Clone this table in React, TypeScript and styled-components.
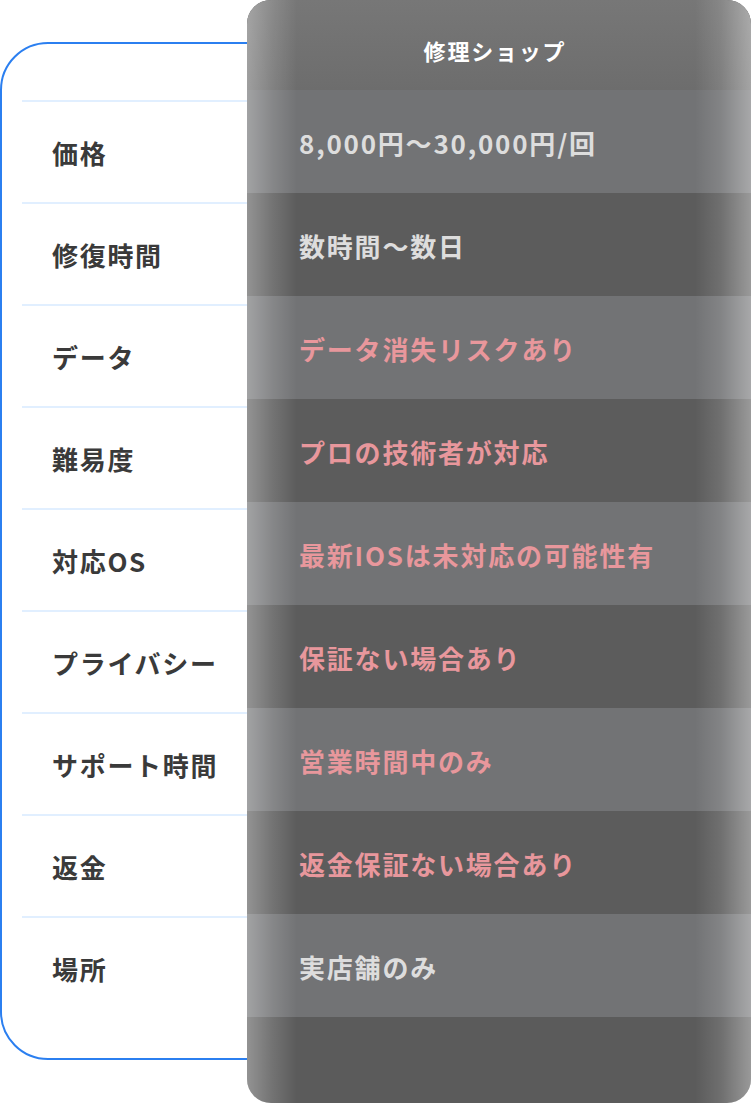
import React from 'react';
import styled, { createGlobalStyle } from 'styled-components';

const GlobalStyle = createGlobalStyle`
  html, body {
    margin: 0;
    padding: 0;
    background: #ffffff;
  }
  body {
    font-family: "Noto Sans CJK JP", "Noto Sans", sans-serif;
  }
`;

type Row = { label: string; value: string; warn?: boolean };

const rows: Row[] = [
  { label: '価格', value: '8,000円～30,000円/回' },
  { label: '修復時間', value: '数時間～数日' },
  { label: 'データ', value: 'データ消失リスクあり', warn: true },
  { label: '難易度', value: 'プロの技術者が対応', warn: true },
  { label: '対応OS', value: '最新IOSは未対応の可能性有', warn: true },
  { label: 'プライバシー', value: '保証ない場合あり', warn: true },
  { label: 'サポート時間', value: '営業時間中のみ', warn: true },
  { label: '返金', value: '返金保証ない場合あり', warn: true },
  { label: '場所', value: '実店舗のみ' },
];

const Stage = styled.div`
  display: grid;
  grid-template-columns: 247px 504px;
  width: 752px;
  height: 1104px;
`;

/**
 * Left label card (sits under the shop panel)
 *
 */
const LabelCard = styled.div`
  grid-row: 1;
  grid-column: 1 / 3;
  align-self: start;
  margin-top: 42px;
  padding: 56px 0 40px 20px;
  border: 2px solid #2b7ff0;
  border-radius: 48px;
  background: #ffffff;
`;

const LabelRow = styled.div`
  display: flex;
  align-items: center;
  height: 102px;
  box-sizing: border-box;
  padding: 1px 0 0 30px;
  border-top: 2px solid #e1efff;
  font-size: 26px;
  font-weight: 700;
  color: #3a3a3a;
  letter-spacing: 1.7px;
`;

/**
 * Shop column
 *
 */
const ShopPanel = styled.div`
  grid-row: 1;
  grid-column: 2;
  position: relative;
  z-index: 1;
  display: flex;
  flex-direction: column;
  height: 1103px;
  border-radius: 24px;
  overflow: hidden;
  background: #5b5b5b;

  &::after {
    content: '';
    position: absolute;
    inset: 0;
    pointer-events: none;
    background: linear-gradient(
      to right,
      rgba(255, 255, 255, 0.34) 0,
      rgba(255, 255, 255, 0.14) 26px,
      rgba(255, 255, 255, 0) 50px,
      rgba(255, 255, 255, 0) calc(100% - 56px),
      rgba(255, 255, 255, 0.12) calc(100% - 30px),
      rgba(255, 255, 255, 0.38) 100%
    );
  }
`;

const ShopHeader = styled.div`
  display: flex;
  align-items: center;
  justify-content: center;
  height: 90px;
  box-sizing: border-box;
  padding: 10px 8px 0 0;
  background: linear-gradient(to bottom, #777777, #6d6d6d);
  color: #ffffff;
  font-size: 22px;
  font-weight: 700;
  letter-spacing: 1.8px;
`;

const ValueRow = styled.div<{ $light: boolean; $warn?: boolean }>`
  display: flex;
  align-items: center;
  height: 103px;
  box-sizing: border-box;
  padding: 2px 0 0 52px;
  background: ${(p) => (p.$light ? '#727375' : '#5c5c5c')};
  color: ${(p) => (p.$warn ? '#e8979c' : '#dddddd')};
  font-size: 26px;
  font-weight: 700;
  letter-spacing: 1.8px;
`;

const App: React.FC = () => {
  return (
    <>
      <GlobalStyle />
      <Stage>
        <LabelCard>
          {rows.map((r) => (
            <LabelRow key={r.label}>{r.label}</LabelRow>
          ))}
        </LabelCard>

        <ShopPanel>
          <ShopHeader>修理ショップ</ShopHeader>
          {rows.map((r, i) => (
            <ValueRow key={r.label} $light={i % 2 === 0} $warn={r.warn}>
              {r.value}
            </ValueRow>
          ))}
        </ShopPanel>
      </Stage>
    </>
  );
};

export default App;
